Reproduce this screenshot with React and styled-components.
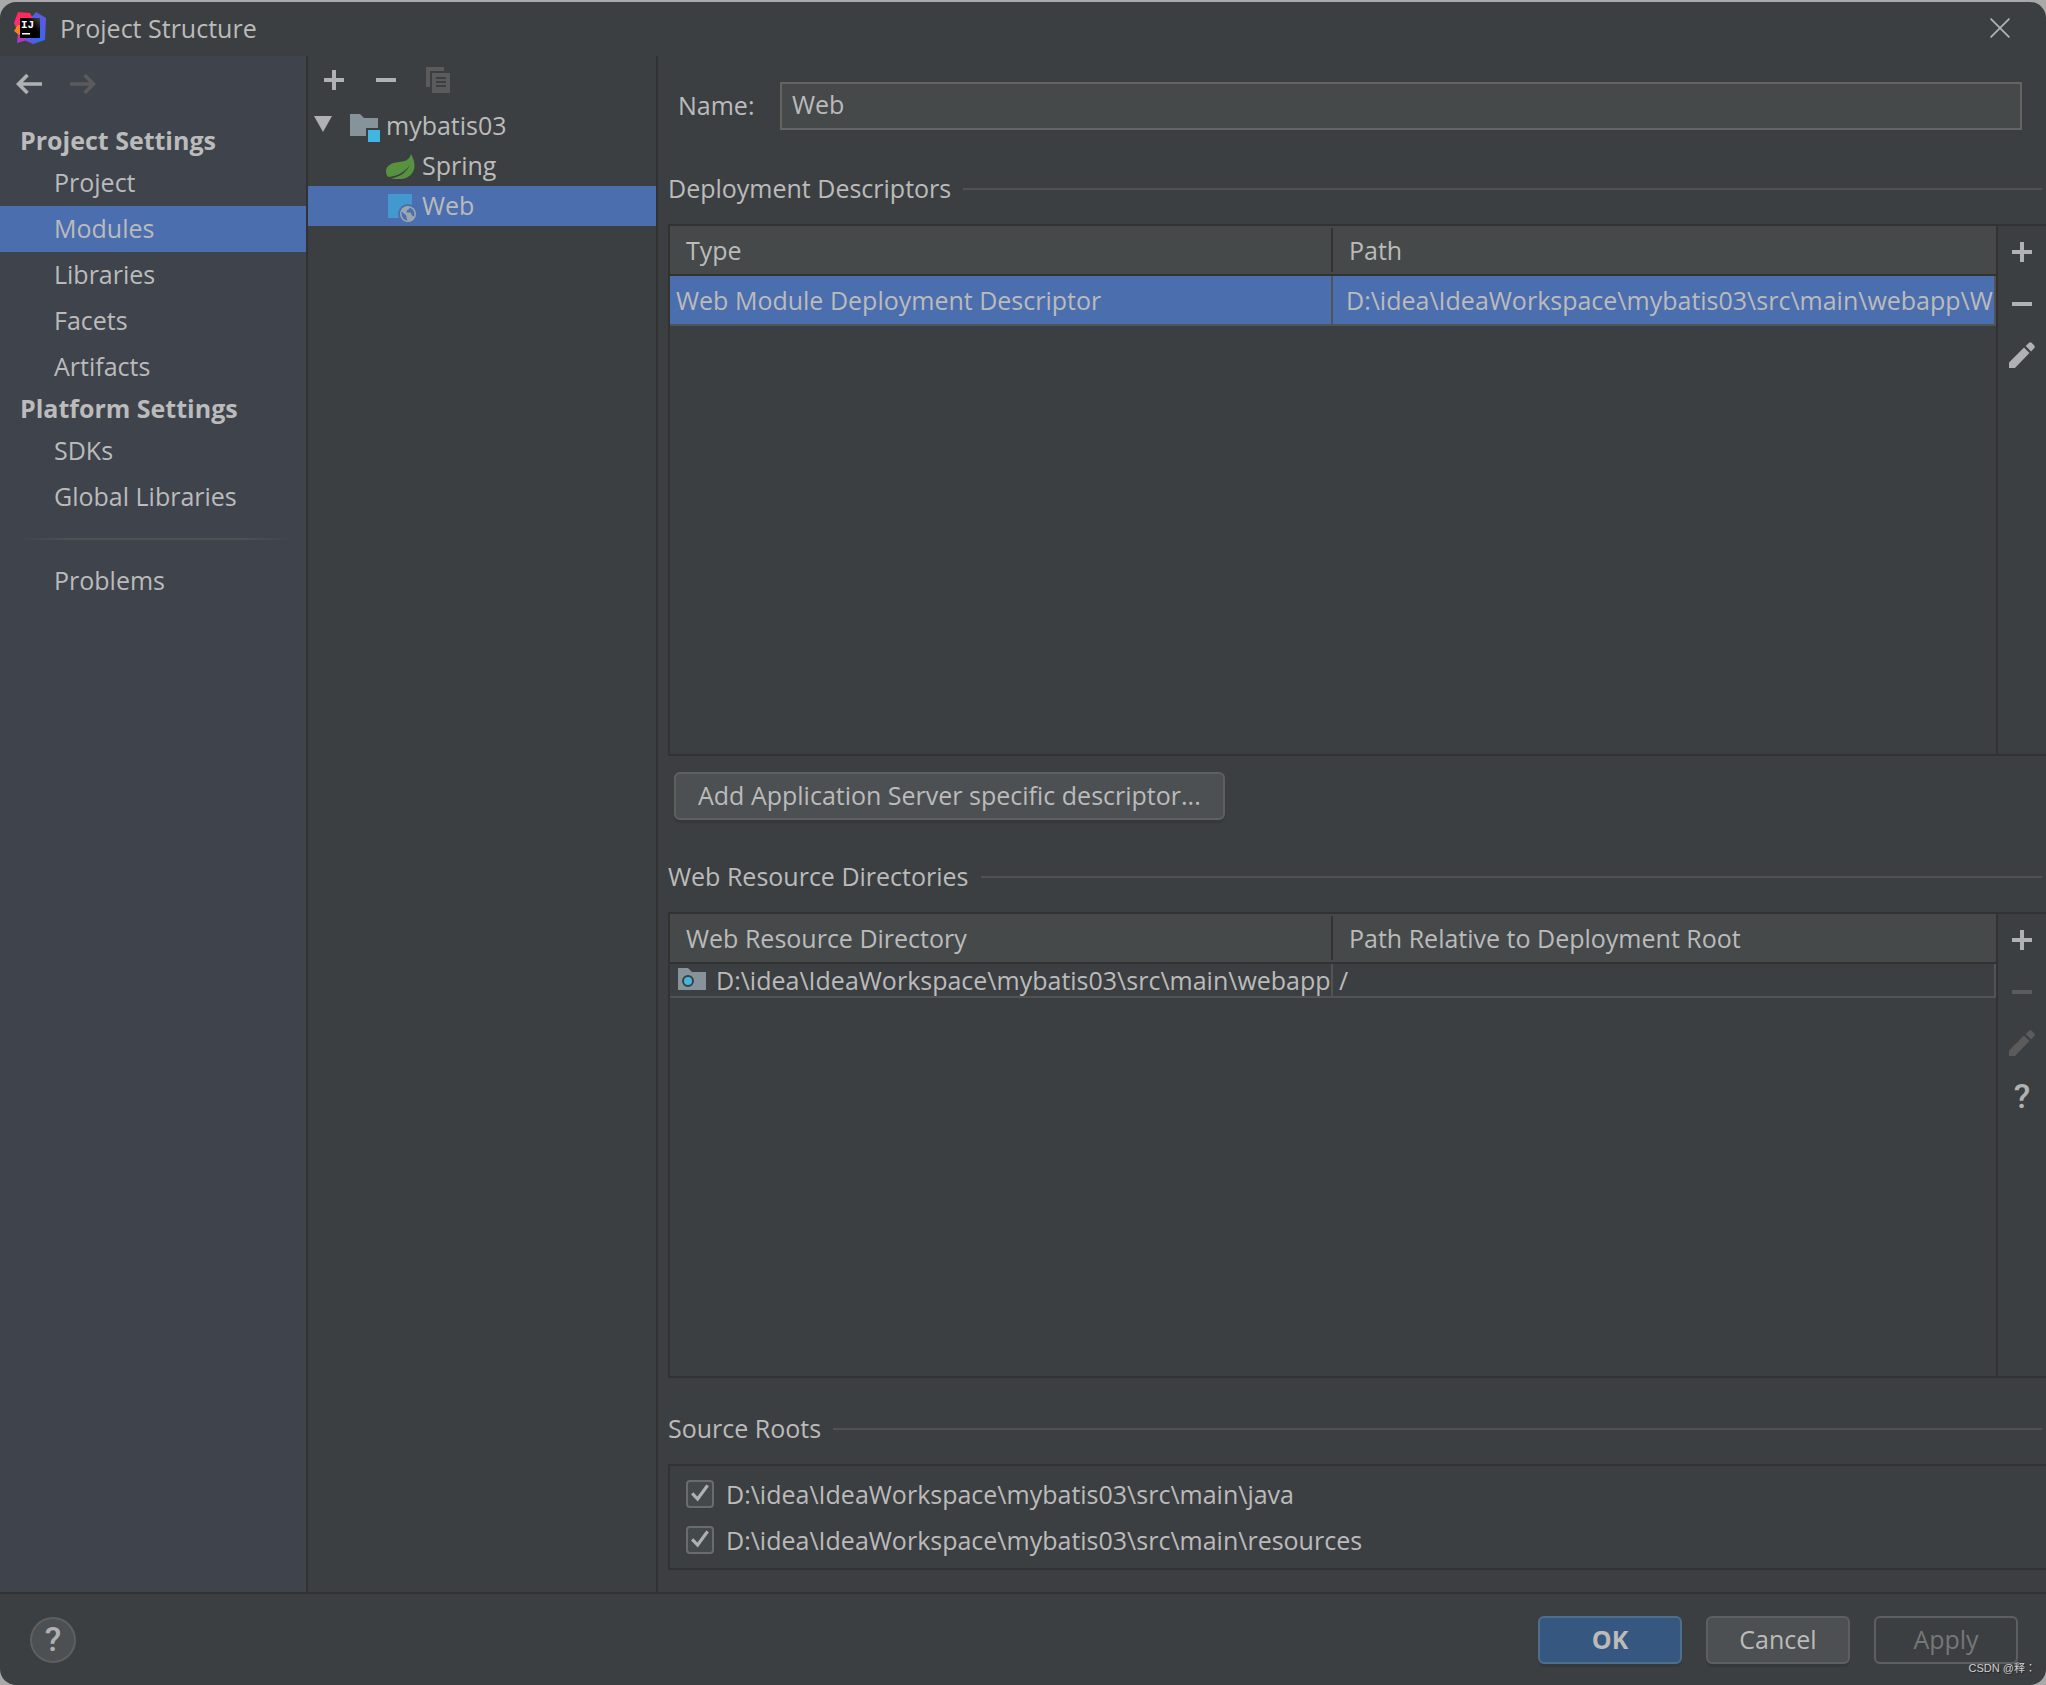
import React, { useState } from 'react';
import styled, { createGlobalStyle } from 'styled-components';

const GlobalStyle = createGlobalStyle`
    * {
        box-sizing: border-box;
    }

    body {
        margin: 0;
        background: #a9a9a9;
        color: #bbbbbb;
        font-family: 'Open Sans', 'Noto Sans', sans-serif;
        font-size: 25px;
        line-height: 34px;
    }

    button, input {
        font: inherit;
        color: inherit;
        margin: 0;
        padding: 0;
    }

    svg {
        display: block;
        flex: none;
    }
`;

const Window = styled.div`
    position: relative;
    display: flex;
    flex-direction: column;
    min-height: calc(100vh - 2px);
    margin-top: 2px;
    background: #3c3f41;
    border-radius: 16px;
    overflow: hidden;
`;

const TitleBar = styled.header`
    display: flex;
    align-items: center;
    height: 54px;
    padding: 0 36px 2px 14px;
`;

const Title = styled.h1`
    flex: 1;
    margin: 0 0 0 14px;
    font-size: 25px;
    font-weight: 400;
`;

const IconButton = styled.button`
    display: flex;
    align-items: center;
    justify-content: center;
    width: ${props => props.$width || 52}px;
    height: ${props => props.$height || 52}px;
    border: 0;
    background: none;
    color: #afb1b3;

    &:disabled {
        color: #5b5b5b;
    }
`;

const Body = styled.div`
    flex: 1;
    display: flex;
`;

const Sidebar = styled.nav`
    flex: none;
    width: 308px;
    border-right: 2px solid #323232;
    background: #3f434c;
`;

const History = styled.div`
    display: flex;
    gap: 2px;
    height: 66px;
    padding-left: 3px;
`;

const GroupTitle = styled.h2`
    margin: 0;
    padding: 0 0 2px 20px;
    font-size: 25px;
    font-weight: 700;
    line-height: 36px;
`;

const NavItem = styled.button`
    display: block;
    width: 100%;
    height: 46px;
    padding: 0 0 2px 54px;
    border: 0;
    background: ${props => (props.$selected ? '#4b6eaf' : 'none')};
    text-align: left;
`;

const NavDivider = styled.hr`
    height: 2px;
    margin: 18px 12px 18px 16px;
    border: 0;
    background: linear-gradient(to right, transparent, #515151 20%, #515151 80%, transparent);
`;

const TreePane = styled.section`
    flex: none;
    width: 350px;
    border-right: 2px solid #323232;
`;

const TreeToolbar = styled.div`
    display: flex;
    height: 50px;
`;

const Tree = styled.ul`
    margin: 0;
    padding: 0;
    list-style: none;
`;

const TreeItem = styled.button`
    display: flex;
    align-items: center;
    width: 100%;
    height: 40px;
    padding: 0 0 2px ${props => (props.$nested ? 78 : 6)}px;
    border: 0;
    background: ${props => (props.$selected ? '#4b6eaf' : 'none')};
    text-align: left;
`;

const TreeIcon = styled.span`
    display: flex;
    align-items: center;
    width: 36px;
    height: 34px;
`;

const Content = styled.main`
    flex: 1;
    min-width: 0;
    display: flex;
    flex-direction: column;
    padding: 26px 0 22px 10px;
`;

const NameRow = styled.div`
    display: flex;
    align-items: center;
    padding: 0 24px 0 10px;
`;

const NameLabel = styled.label`
    width: 102px;
    padding-bottom: 2px;
`;

const NameInput = styled.input`
    flex: 1;
    min-width: 0;
    height: 48px;
    padding: 0 10px 4px;
    border: 2px solid #646464;
    background: #45494a;
    outline: none;
`;

const SectionTitle = styled.h2`
    display: flex;
    align-items: center;
    gap: 12px;
    margin: ${props => props.$space}px 4px 19px 0;
    font-size: 25px;
    font-weight: 400;

    &::after {
        content: '';
        flex: 1;
        height: 2px;
        margin-top: 2px;
        background: #515151;
    }
`;

const TablePanel = styled.div`
    flex: ${props => props.$grow} 1 0;
    display: flex;
    border: 2px solid #323232;
    border-right: 0;
`;

const TableArea = styled.div`
    flex: 1;
    min-width: 0;
    border-right: 2px solid #323232;
`;

const PanelButtons = styled.div`
    display: flex;
    flex-direction: column;
    width: 48px;
`;

const Table = styled.table`
    width: 100%;
    table-layout: fixed;
    border-collapse: separate;
    border-spacing: 0;
`;

const HeadCell = styled.th`
    height: 50px;
    padding: 0 16px;
    border-bottom: 2px solid #323232;
    background: #45494a;
    font-weight: 400;
    text-align: left;

    &:first-child {
        background: linear-gradient(#323232, #323232) right center / 2px 44px no-repeat #45494a;
    }
`;

const Cell = styled.td`
    height: ${props => (props.$compact ? 34 : 50)}px;
    padding: 0 0 0 ${props => props.$indent || 6}px;
    border-right: 2px solid #515355;
    border-bottom: 2px solid #515355;
    background: ${props => (props.$selected ? '#4b6eaf' : 'none')};
    line-height: 32px;
    white-space: nowrap;
    overflow: hidden;
`;

const IconText = styled.span`
    display: flex;
    align-items: center;
    gap: 10px;
`;

const Button = styled.button`
    height: 48px;
    min-width: 144px;
    padding: 0 22px 2px;
    border: 2px solid #5e6060;
    border-radius: 6px;
    background: #4c5052;
    box-shadow: 0 3px 1px #36393a;

    &:disabled {
        background: none;
        box-shadow: none;
        color: #777777;
    }
`;

const AddButton = styled(Button)`
    align-self: flex-start;
    margin: 16px 0 0 6px;
`;

const PrimaryButton = styled(Button)`
    border-color: #4c708c;
    background: #365880;
    font-weight: 700;
`;

const RootList = styled.div`
    padding: 5px 16px;
    border: 2px solid #323232;
    border-right: 0;
`;

const RootLabel = styled.label`
    display: flex;
    align-items: center;
    height: 46px;
`;

const CheckBox = styled.span`
    position: relative;
    display: flex;
    width: 28px;
    height: 28px;
    margin-right: 12px;

    input {
        appearance: none;
        width: 28px;
        height: 28px;
        border: 2px solid #6b6b6b;
        border-radius: 4px;
        background: #43494a;
    }

    svg {
        position: absolute;
        top: 4px;
        left: 5px;
        pointer-events: none;
    }

    input:not(:checked) + svg {
        display: none;
    }
`;

const Footer = styled.footer`
    display: flex;
    align-items: center;
    gap: 24px;
    padding: 22px 28px 21px 30px;
    border-top: 2px solid #323232;
`;

const HelpButton = styled.button`
    width: 46px;
    height: 46px;
    margin-right: auto;
    border: 2px solid #5e6060;
    border-radius: 50%;
    background: #4c5052;
`;

const HelpMark = styled.span`
    color: #afb1b3;
    font-family: Roboto, sans-serif;
    font-size: 34px;
    font-weight: 500;
`;

const Watermark = styled.div`
    position: absolute;
    right: 10px;
    bottom: 9px;
    color: #d0d0d0;
    font-family: 'Liberation Sans', 'Noto Sans CJK TC', sans-serif;
    font-size: 11px;
    line-height: 16px;
    text-shadow: 1px 1px 1px #222222;
`;

const LogoIcon = () => (
    <svg width="32" height="32" viewBox="0 0 32 32">
        <defs>
            <linearGradient id="logoBlue" x1="0" y1="1" x2="1" y2="0">
                <stop offset="0" stopColor="#9a3fd0" />
                <stop offset="0.4" stopColor="#2f6af0" />
                <stop offset="1" stopColor="#6b55dd" />
            </linearGradient>
            <linearGradient id="logoRed" x1="0" y1="0" x2="0" y2="1">
                <stop offset="0" stopColor="#ff2858" />
                <stop offset="0.5" stopColor="#f5317f" />
                <stop offset="1" stopColor="#9b3bd0" />
            </linearGradient>
            <linearGradient id="logoBlack" x1="0" y1="1" x2="1" y2="0">
                <stop offset="0.6" stopColor="#000000" />
                <stop offset="1" stopColor="#444444" />
            </linearGradient>
        </defs>
        <path d="M16 7L22 0L32 6L31 28L19 32L8 27Z" fill="url(#logoBlue)" />
        <path d="M4 0L16 1L20 8L10 25L13 28L3 31L4 20L0 11Z" fill="url(#logoRed)" />
        <path d="M4 13L0 19L5 23L8 20V13Z" fill="#fc801d" />
        <rect x="6" y="6" width="20" height="20" fill="url(#logoBlack)" />
        <text x="7" y="16" fill="#ffffff" fontFamily="Liberation Mono, monospace" fontSize="11" fontWeight="700">IJ</text>
        <rect x="8" y="21" width="8" height="1.5" fill="#ffffff" />
    </svg>
);

const CloseIcon = () => (
    <svg width="20" height="20" viewBox="0 0 20 20" stroke="currentColor" strokeWidth="1.8">
        <path d="M0.6 0.6L19.4 19.4M19.4 0.6L0.6 19.4" />
    </svg>
);

const ArrowIcon = ({ right }) => (
    <svg width="26" height="22" viewBox="0 0 26 22" fill="none" stroke="currentColor" strokeWidth="3.6">
        <path d={right ? 'M0 11H23M14.5 2L23.5 11L14.5 20' : 'M26 11H3M11.5 2L2.5 11L11.5 20'} />
    </svg>
);

const PlusIcon = () => (
    <svg width="20" height="20" viewBox="0 0 20 20" fill="currentColor">
        <path d="M8 0H12V8H20V12H12V20H8V12H0V8H8Z" />
    </svg>
);

const MinusIcon = () => (
    <svg width="20" height="20" viewBox="0 0 20 20" fill="currentColor">
        <path d="M0 8H20V12H0Z" />
    </svg>
);

const CopyIcon = () => (
    <svg width="24" height="26" viewBox="0 0 24 26" fill="currentColor">
        <path d="M0 0H18V4H4V20H0Z" />
        <path fillRule="evenodd" d="M6 6H24V26H6ZM10 10V12H20V10ZM10 14V16H20V14ZM10 18V20H20V18Z" />
    </svg>
);

const PencilIcon = () => (
    <svg width="26" height="28" viewBox="0 0 26 28" fill="currentColor">
        <path d="M0 26V20.6L15 5.6L20.4 11L6 26Z" />
        <path d="M16.7 4L19.5 1.2Q21.3 -0.6 23.1 1.2L24.9 3Q26.7 4.8 24.9 6.6L22.1 9.4Z" />
    </svg>
);

const ExpandedIcon = () => (
    <svg width="18" height="18" viewBox="0 0 18 18" fill="#afb1b3">
        <path d="M0 0H18L9 16Z" />
    </svg>
);

const ModuleIcon = () => (
    <svg width="30" height="34" viewBox="0 -6 30 34">
        <path d="M0 0H10L14 4H28V14H16V22H0Z" fill="#87939a" />
        <rect x="18" y="16" width="12" height="12" fill="#40b6e0" />
    </svg>
);

const SpringIcon = () => (
    <svg width="29" height="28" viewBox="0 -3 29 28" fill="#57923f">
        <path d="M25 0C23.5 5 20.5 7.2 14.5 7.8C5.5 8.6 0 11.5 0 17.5C0 20 1 21.8 2.4 23C11.5 22 19.5 18.2 24 10.5C21 18.5 13.5 23 5 24.6C9 25.2 14 25.2 18 24.4C25 22.8 28.5 17.5 28.5 11.5C28.5 7.5 26.8 3.4 25 0Z" />
    </svg>
);

const WebIcon = () => (
    <svg width="30" height="34" viewBox="-2 -6 30 34">
        <rect width="24" height="24" fill="#4398cf" />
        <circle cx="20" cy="20" r="10" fill="#4b6eaf" />
        <circle cx="20" cy="20" r="8" fill="#9aa7b0" />
        <path d="M13.6 17.5L18.5 21.8V24L19.6 26.6C15.5 26.4 13 22.4 13.6 17.5Z" fill="#4b6eaf" />
        <path d="M21.5 13.6C21.5 15.4 20.5 15.8 19 16L18.6 18.6H22.6L24 21.4L26 22.6C27.2 19 25.6 15.2 21.5 13.6Z" fill="#4b6eaf" />
    </svg>
);

const WebFolderIcon = () => (
    <svg width="28" height="24" viewBox="0 0 28 24">
        <path d="M0 0H10L14 4H28V22H0Z" fill="#87939a" />
        <circle cx="10" cy="13" r="5" fill="#40b6e0" stroke="#3c3f41" strokeWidth="2" />
    </svg>
);

const CheckIcon = () => (
    <svg width="18" height="18" viewBox="0 0 18 18" fill="none" stroke="#b0b0b0" strokeWidth="3.2">
        <path d="M1.2 9.4L6.6 15L16.6 1.4" />
    </svg>
);

const projectItems = ['Project', 'Modules', 'Libraries', 'Facets', 'Artifacts'];
const platformItems = ['SDKs', 'Global Libraries'];
const sourceRoots = [
    'D:\\idea\\IdeaWorkspace\\mybatis03\\src\\main\\java',
    'D:\\idea\\IdeaWorkspace\\mybatis03\\src\\main\\resources',
];

const App = () => {
    const [page, setPage] = useState('Modules');
    const [node, setNode] = useState('Web');

    const renderNav = item => (
        <NavItem key={item} $selected={page === item} onClick={() => setPage(item)}>{item}</NavItem>
    );

    return (
        <Window>
            <GlobalStyle />
            <TitleBar>
                <LogoIcon />
                <Title>Project Structure</Title>
                <IconButton $width={20} aria-label="Close"><CloseIcon /></IconButton>
            </TitleBar>
            <Body>
                <Sidebar>
                    <History>
                        <IconButton $height={56} aria-label="Back"><ArrowIcon /></IconButton>
                        <IconButton $height={56} aria-label="Forward" disabled><ArrowIcon right /></IconButton>
                    </History>
                    <GroupTitle>Project Settings</GroupTitle>
                    {projectItems.map(renderNav)}
                    <GroupTitle>Platform Settings</GroupTitle>
                    {platformItems.map(renderNav)}
                    <NavDivider />
                    {renderNav('Problems')}
                </Sidebar>
                <TreePane>
                    <TreeToolbar>
                        <IconButton $height={48} aria-label="Add"><PlusIcon /></IconButton>
                        <IconButton $height={48} aria-label="Remove"><MinusIcon /></IconButton>
                        <IconButton $height={48} aria-label="Copy" disabled><CopyIcon /></IconButton>
                    </TreeToolbar>
                    <Tree>
                        <li>
                            <TreeItem $selected={node === 'mybatis03'} onClick={() => setNode('mybatis03')}>
                                <TreeIcon><ExpandedIcon /></TreeIcon>
                                <TreeIcon><ModuleIcon /></TreeIcon>
                                mybatis03
                            </TreeItem>
                            <Tree>
                                <li>
                                    <TreeItem $nested $selected={node === 'Spring'} onClick={() => setNode('Spring')}>
                                        <TreeIcon><SpringIcon /></TreeIcon>
                                        Spring
                                    </TreeItem>
                                </li>
                                <li>
                                    <TreeItem $nested $selected={node === 'Web'} onClick={() => setNode('Web')}>
                                        <TreeIcon><WebIcon /></TreeIcon>
                                        Web
                                    </TreeItem>
                                </li>
                            </Tree>
                        </li>
                    </Tree>
                </TreePane>
                <Content>
                    <NameRow>
                        <NameLabel htmlFor="name">Name:</NameLabel>
                        <NameInput id="name" type="text" defaultValue="Web" />
                    </NameRow>

                    <SectionTitle $space={41}>Deployment Descriptors</SectionTitle>
                    <TablePanel $grow={8}>
                        <TableArea>
                            <Table>
                                <thead>
                                    <tr>
                                        <HeadCell>Type</HeadCell>
                                        <HeadCell>Path</HeadCell>
                                    </tr>
                                </thead>
                                <tbody>
                                    <tr>
                                        <Cell $selected>Web Module Deployment Descriptor</Cell>
                                        <Cell $selected $indent={13}>D:\idea\IdeaWorkspace\mybatis03\src\main\webapp\WEB-INF\web.xml</Cell>
                                    </tr>
                                </tbody>
                            </Table>
                        </TableArea>
                        <PanelButtons>
                            <IconButton $width={48} aria-label="Add descriptor"><PlusIcon /></IconButton>
                            <IconButton $width={48} aria-label="Remove descriptor"><MinusIcon /></IconButton>
                            <IconButton $width={48} aria-label="Edit descriptor"><PencilIcon /></IconButton>
                        </PanelButtons>
                    </TablePanel>
                    <AddButton>Add Application Server specific descriptor...</AddButton>

                    <SectionTitle $space={39}>Web Resource Directories</SectionTitle>
                    <TablePanel $grow={7}>
                        <TableArea>
                            <Table>
                                <thead>
                                    <tr>
                                        <HeadCell>Web Resource Directory</HeadCell>
                                        <HeadCell>Path Relative to Deployment Root</HeadCell>
                                    </tr>
                                </thead>
                                <tbody>
                                    <tr>
                                        <Cell $compact $indent={8}>
                                            <IconText>
                                                <WebFolderIcon />
                                                D:\idea\IdeaWorkspace\mybatis03\src\main\webapp
                                            </IconText>
                                        </Cell>
                                        <Cell $compact>/</Cell>
                                    </tr>
                                </tbody>
                            </Table>
                        </TableArea>
                        <PanelButtons>
                            <IconButton $width={48} aria-label="Add directory"><PlusIcon /></IconButton>
                            <IconButton $width={48} aria-label="Remove directory" disabled><MinusIcon /></IconButton>
                            <IconButton $width={48} aria-label="Edit directory" disabled><PencilIcon /></IconButton>
                            <IconButton $width={48} aria-label="Directory help"><HelpMark>?</HelpMark></IconButton>
                        </PanelButtons>
                    </TablePanel>

                    <SectionTitle $space={33}>Source Roots</SectionTitle>
                    <RootList>
                        {sourceRoots.map(root => (
                            <RootLabel key={root}>
                                <CheckBox>
                                    <input type="checkbox" defaultChecked />
                                    <CheckIcon />
                                </CheckBox>
                                {root}
                            </RootLabel>
                        ))}
                    </RootList>
                </Content>
            </Body>
            <Footer>
                <HelpButton aria-label="Help"><HelpMark>?</HelpMark></HelpButton>
                <PrimaryButton>OK</PrimaryButton>
                <Button>Cancel</Button>
                <Button disabled>Apply</Button>
            </Footer>
            <Watermark>CSDN @释：</Watermark>
        </Window>
    );
};

export default App;
